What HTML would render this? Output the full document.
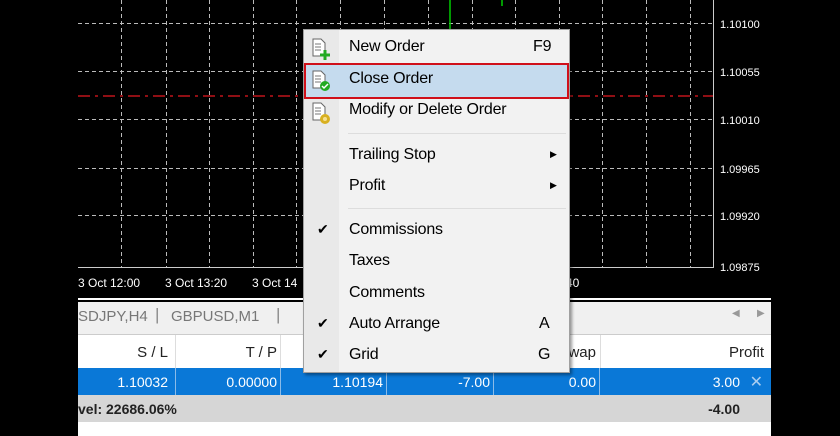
<!DOCTYPE html><html><head><style>
body{margin:0;width:840px;height:436px;background:#000;position:relative;overflow:hidden;font-family:"Liberation Sans",sans-serif}
.a{position:absolute}
.t{font-size:16px;color:#000;letter-spacing:-0.2px}
</style></head><body>
<svg class="a" style="left:78px;top:0" width="693" height="300">
<g stroke="#bbb" stroke-dasharray="4,3" stroke-width="1">
<line x1="0" y1="23.5" x2="635" y2="23.5"/><line x1="0" y1="71.5" x2="635" y2="71.5"/><line x1="0" y1="119.5" x2="635" y2="119.5"/><line x1="0" y1="168.5" x2="635" y2="168.5"/><line x1="0" y1="215.5" x2="635" y2="215.5"/>
<line x1="43.5" y1="0" x2="43.5" y2="267"/><line x1="88.5" y1="0" x2="88.5" y2="267"/><line x1="131.5" y1="0" x2="131.5" y2="267"/><line x1="175.5" y1="0" x2="175.5" y2="267"/><line x1="218.5" y1="0" x2="218.5" y2="267"/><line x1="262.5" y1="0" x2="262.5" y2="267"/><line x1="306.5" y1="0" x2="306.5" y2="267"/><line x1="350.5" y1="0" x2="350.5" y2="267"/><line x1="394.5" y1="0" x2="394.5" y2="267"/><line x1="437.5" y1="0" x2="437.5" y2="267"/><line x1="481.5" y1="0" x2="481.5" y2="267"/><line x1="524.5" y1="0" x2="524.5" y2="267"/><line x1="568.5" y1="0" x2="568.5" y2="267"/><line x1="612.5" y1="0" x2="612.5" y2="267"/>
</g>
<line x1="0" y1="96" x2="635" y2="96" stroke="#c0141a" stroke-width="1.5" stroke-dasharray="12,5,3,5"/>
<polyline points="0,267.5 635.5,267.5 635.5,0" fill="none" stroke="#ccc"/>
<line x1="372" y1="0" x2="372" y2="30" stroke="#0c0" stroke-width="1.5"/>
<line x1="424" y1="0" x2="424" y2="6" stroke="#0c0" stroke-width="1.5"/>
<g fill="#fff" font-size="11" font-family="Liberation Sans">
<text x="642" y="28">1.10100</text><text x="642" y="76">1.10055</text><text x="642" y="124">1.10010</text><text x="642" y="173">1.09965</text><text x="642" y="220">1.09920</text><text x="642" y="271">1.09875</text>
</g>
<g fill="#fff" font-size="12" font-family="Liberation Sans">
<text x="0" y="287">3 Oct 12:00</text><text x="87" y="287">3 Oct 13:20</text><text x="174" y="287">3 Oct 14</text><text x="488" y="287">40</text>
</g>
<line x1="0" y1="299" x2="693" y2="299" stroke="#fff" stroke-width="2"/>
</svg>
<div class="a" style="left:78px;top:302px;width:693px;height:32px;background:#f0f0f0;border-bottom:1px solid #ccc;font-size:15px;color:#777">
<span class="a" style="left:0;top:6px">SDJPY,H4</span><span class="a" style="left:77px;top:3px;color:#888;font-size:17px">|</span><span class="a" style="left:93px;top:6px">GBPUSD,M1</span><span class="a" style="left:198px;top:3px;color:#888;font-size:17px">|</span>
<span class="a" style="left:654px;top:6px;font-size:10px;color:#999">◀</span><span class="a" style="left:679px;top:6px;font-size:10px;color:#999">▶</span></div>
<div class="a" style="left:78px;top:335px;width:693px;height:33px;background:#fff;font-size:15px;color:#222">
<span class="a" style="right:603px;top:9px">S / L</span><span class="a" style="left:97px;top:0;width:1px;height:33px;background:#ddd"></span>
<span class="a" style="right:494px;top:9px">T / P</span><span class="a" style="left:202px;top:0;width:1px;height:33px;background:#ddd"></span>
<span class="a" style="right:175px;top:9px">wap</span><span class="a" style="left:522px;top:0;width:1px;height:33px;background:#ddd"></span>
<span class="a" style="right:7px;top:9px">Profit</span></div>
<div class="a" style="left:78px;top:368px;width:693px;height:27px;background:#0a78d7;font-size:14px;color:#fff">
<span class="a" style="right:603px;top:6px">1.10032</span><span class="a" style="left:97px;top:0;width:1px;height:27px;background:#8bbbe8"></span>
<span class="a" style="right:494px;top:6px">0.00000</span><span class="a" style="left:202px;top:0;width:1px;height:27px;background:#8bbbe8"></span>
<span class="a" style="right:388px;top:6px">1.10194</span><span class="a" style="left:308px;top:0;width:1px;height:27px;background:#8bbbe8"></span>
<span class="a" style="right:281px;top:6px">-7.00</span><span class="a" style="left:415px;top:0;width:1px;height:27px;background:#8bbbe8"></span>
<span class="a" style="right:175px;top:6px">0.00</span><span class="a" style="left:521px;top:0;width:1px;height:27px;background:#8bbbe8"></span>
<span class="a" style="right:31px;top:6px">3.00</span><span class="a" style="right:8px;top:4px;color:#a9cdf0;font-size:16px">✕</span></div>
<div class="a" style="left:78px;top:395px;width:693px;height:27px;background:#d6d6d6;font-size:14px;color:#222;font-weight:bold">
<span class="a" style="left:0;top:6px">vel: 22686.06%</span><span class="a" style="right:31px;top:6px">-4.00</span></div>
<div class="a" style="left:78px;top:422px;width:693px;height:14px;background:#fff"></div>
<div class="a" style="left:303px;top:29px;width:265px;height:342px;background:#f2f2f2;border:1px solid #a0a0a0;box-shadow:2px 2px 3px rgba(0,0,0,.4)">
<div class="a" style="left:0;top:0;width:35px;height:342px;background:#e9e9e9"></div>
<div class="a" style="left:0;top:33px;width:261px;height:32px;background:#c5dbee;border:2px solid #d0101a"></div>
<div class="a" style="left:44px;top:103px;width:218px;height:1px;background:#ddd"></div>
<div class="a" style="left:44px;top:178px;width:218px;height:1px;background:#ddd"></div>
<div class="t a" style="left:45px;top:8px">New Order</div><div class="t a" style="left:229px;top:8px">F9</div>
<div class="t a" style="left:45px;top:40px">Close Order</div>
<div class="t a" style="left:45px;top:71px">Modify or Delete Order</div>
<div class="t a" style="left:45px;top:116px">Trailing Stop</div><div class="a" style="left:246px;top:119px;font-size:9px">▶</div>
<div class="t a" style="left:45px;top:147px">Profit</div><div class="a" style="left:246px;top:150px;font-size:9px">▶</div>
<div class="t a" style="left:45px;top:191px">Commissions</div>
<div class="t a" style="left:45px;top:222px">Taxes</div>
<div class="t a" style="left:45px;top:254px">Comments</div>
<div class="t a" style="left:45px;top:285px">Auto Arrange</div><div class="t a" style="left:235px;top:285px">A</div>
<div class="t a" style="left:45px;top:316px">Grid</div><div class="t a" style="left:234px;top:316px">G</div>
<div class="a" style="left:13px;top:191px;font-size:14px">✔</div>
<div class="a" style="left:13px;top:285px;font-size:14px">✔</div>
<div class="a" style="left:13px;top:316px;font-size:14px">✔</div>
<svg class="a" style="left:7px;top:8px" width="22" height="90">
<g fill="#fff" stroke="#666"><path d="M2 1h8l4 4v13H2z"/><path d="M2 33h8l4 4v13H2z"/><path d="M2 65h8l4 4v13H2z"/></g>
<g stroke="#777"><path d="M4 6h6M4 9h6M4 12h6M4 38h6M4 41h6M4 44h6M4 70h6M4 73h6M4 76h6"/></g>
<path d="M14 12v10M9 17h10" stroke="#2a2" stroke-width="3"/>
<circle cx="14" cy="48" r="5" fill="#2a2"/><path d="M11 48l2 2 4-4" stroke="#fff" fill="none" stroke-width="1.5"/>
<circle cx="14" cy="81" r="5" fill="#d8b020"/><circle cx="14" cy="81" r="2" fill="#f5e090"/>
</svg>
</div>
</body></html>
